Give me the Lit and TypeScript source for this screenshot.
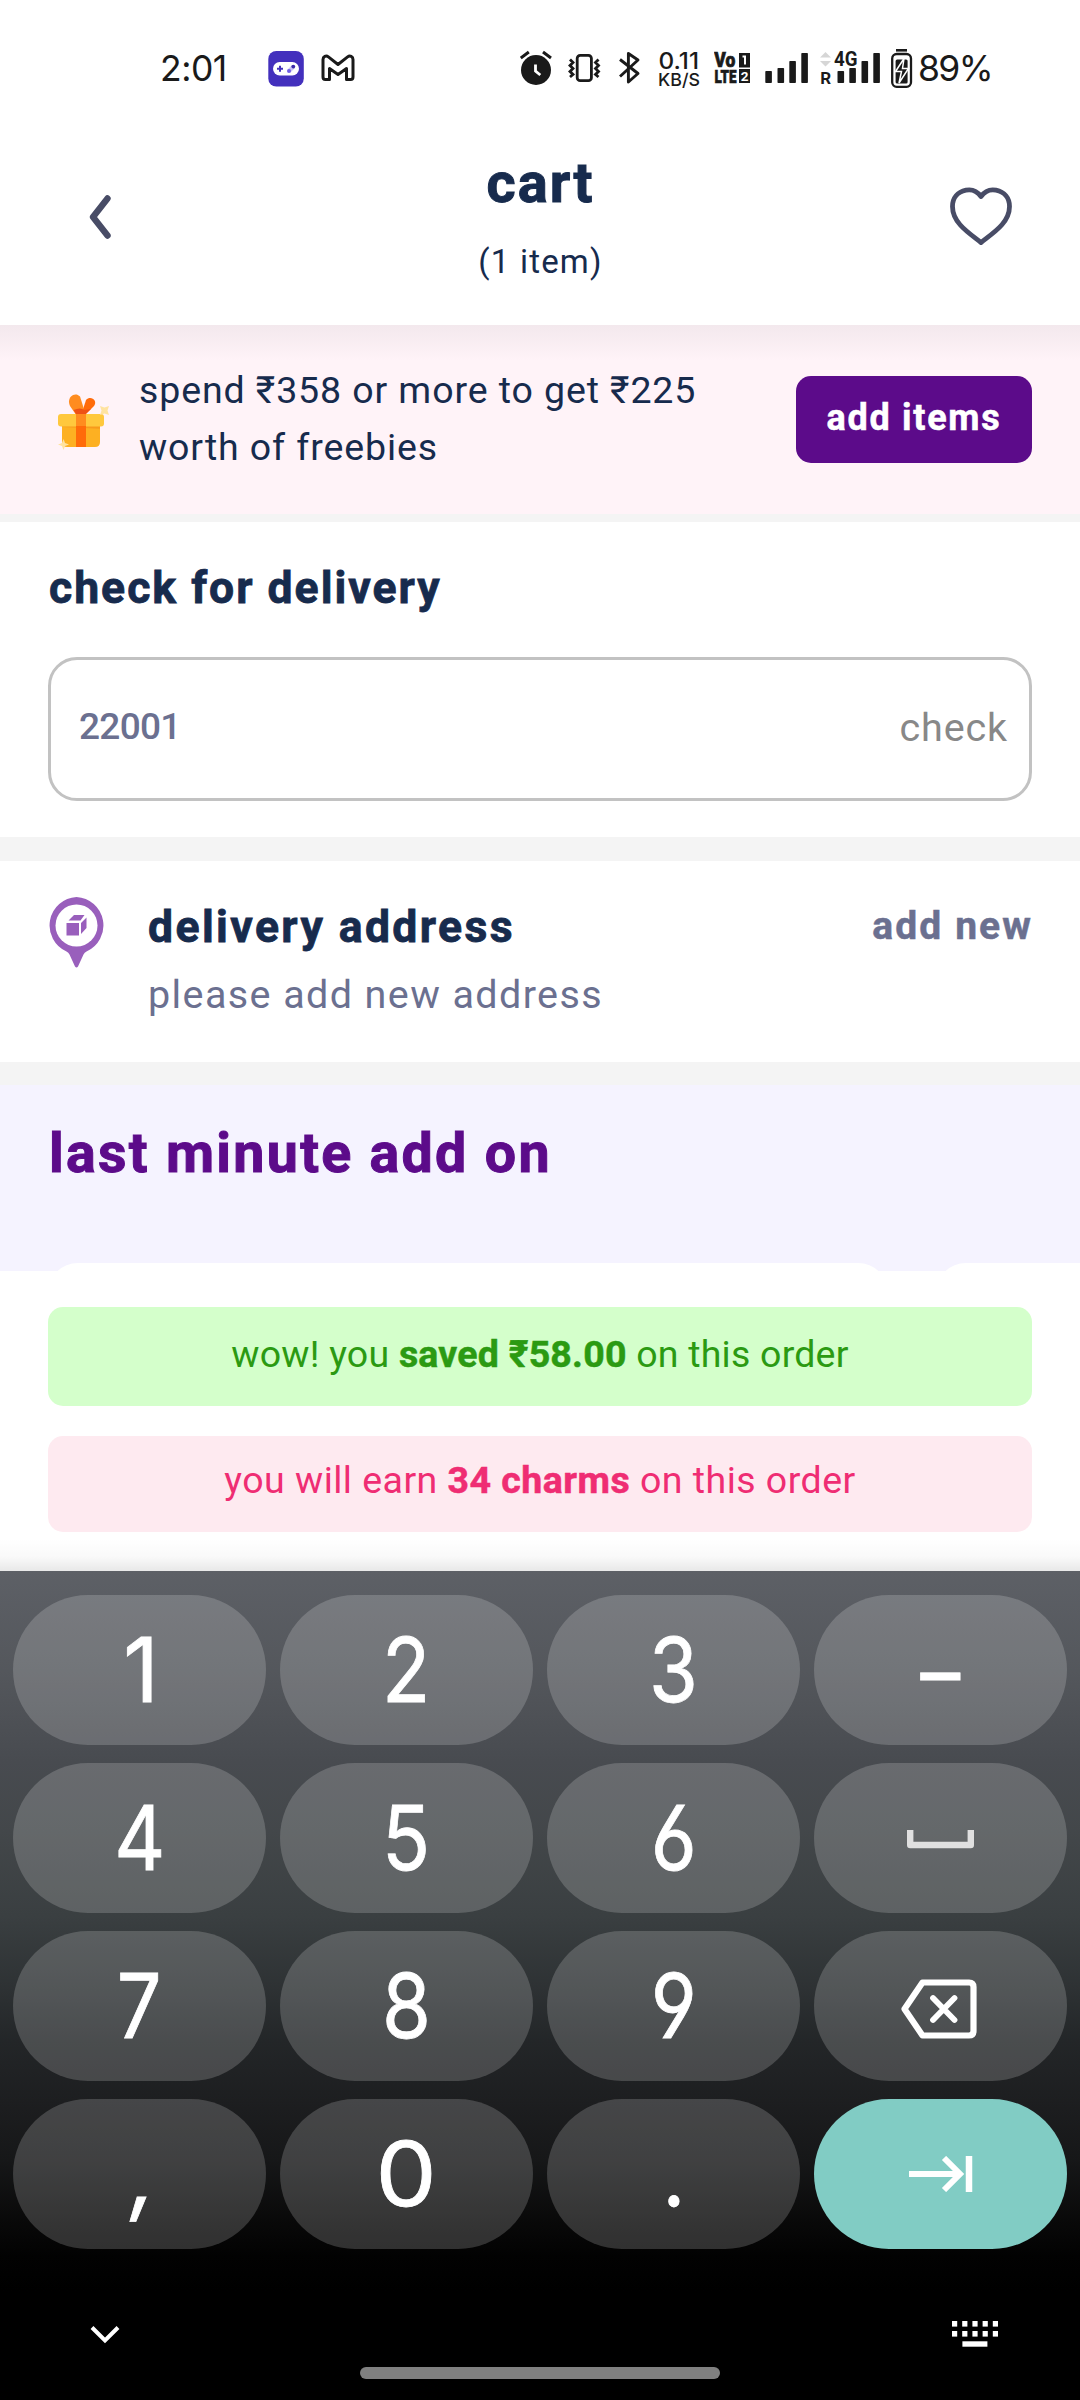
import { LitElement, html, svg, css } from "lit";
import { customElement } from "lit/decorators.js";

const INK = "#1a1a1a";

@customElement("status-bar")
class StatusBar extends LitElement {
  static styles = css`
    :host { display: flex; height: 118px; flex: none; padding-left: 158px; font-family: Inter, Roboto, "Liberation Sans", sans-serif; color: #1a1a1a; }
    svg { display: block; flex: none; height: 118px; }
    .time, .pct { flex: none; font-size: 35.5px; line-height: 42px; padding-top: 48px; white-space: nowrap; }
    .time { width: 110px; padding-left: 2px; letter-spacing: -0.5px; box-sizing: border-box; }
    .pct { letter-spacing: -1.6px; margin-left: 5px; }
    .gap { width: 145px; flex: none; }
    text { font-family: Roboto, "Liberation Sans", sans-serif; fill: #1a1a1a; }
    .rate { font-family: Inter, Roboto, sans-serif; }
    .inverse { fill: #fff; }
  `;
  render() {
    const bar = (x: number, top: number) => svg`<rect x=${x} y=${top} width="6.6" height=${83 - top} rx="0.8" fill=${INK}/>`;
    return html`
      <div class="time">2:01</div>
      <svg width="107" viewBox="268 0 107 118">
        <rect x="268.3" y="51" width="35.5" height="35.5" rx="8" fill="#4330bd"/>
        <rect x="273" y="62" width="26" height="13.4" rx="6.7" fill="#fff"/>
        <path d="M277 68.7h6M280 65.7v6" stroke="#4330bd" stroke-width="2"/>
        <path d="M289 71l4.500-4.500" stroke="#c9c3f2" stroke-width="4"/>
        <circle cx="289" cy="71" r="2" fill="#6f5ee6"/><circle cx="293.3" cy="66.6" r="1.9" fill="#3a28a8"/>
        <path d="M323 59.500c0-3 3-4.400 5.400-2.600L338 64.500l9.600-7.600c2.400-1.800 5.400-.4 5.400 2.600V77c0 1.600-.8 2.500-2.300 2.500H346.500V68.500l-8.500 6-8.500-6v11h-4.200c-1.500 0-2.300-.9-2.300-2.500z" fill="#fff" stroke=${INK} stroke-width="3" stroke-linejoin="round"/>
      </svg>
      <div class="gap"></div>
      <svg width="33" viewBox="520 0 33 118">
        <circle cx="536" cy="70" r="15" fill=${INK}/>
        <path d="M520.800 58l8-6M551 58l-8-6" stroke=${INK} stroke-width="3"/>
        <path d="M535.500 64.500v6.500l4.800 4" fill="none" stroke="#fff" stroke-width="2.800"/>
      </svg>
      <svg width="66" viewBox="553 0 66 118">
        <rect x="577.2" y="55.3" width="14.2" height="25.4" rx="3" fill="none" stroke=${INK} stroke-width="2.8"/>
        <path d="M570 59.500l3 3-3 3 3 3-3 3 3 3-3 2.500M598.500 59.500l-3 3 3 3-3 3 3 3-3 3 3 2.500" fill="none" stroke=${INK} stroke-width="2.800"/>
      </svg>
      <svg width="39" viewBox="619 0 39 118">
        <path d="M620 59.500l18 14-9.600 8.500V53.500l9.600 6.500-18 16.500" fill="none" stroke=${INK} stroke-width="2.900" stroke-linejoin="round"/>
      </svg>
      <svg width="56" viewBox="658 0 56 118">
        <text class="rate" x="658.5" y="69" font-size="22.5" font-weight="500" textLength="40.5" lengthAdjust="spacingAndGlyphs">0.11</text>
        <text class="rate" x="658" y="86" font-size="17.5" font-weight="500" textLength="42" lengthAdjust="spacingAndGlyphs">KB/S</text>
      </svg>
      <svg width="51" viewBox="714 0 51 118">
        <text x="714.3" y="67.3" font-size="19.5" font-weight="900" textLength="21" lengthAdjust="spacingAndGlyphs" stroke=${INK} stroke-width="0.7">Vo</text>
        <text x="714.5" y="82.8" font-size="19" font-weight="900" textLength="22" lengthAdjust="spacingAndGlyphs" stroke=${INK} stroke-width="0.7">LTE</text>
        <rect x="739" y="53" width="11" height="14.5" fill=${INK}/><rect x="739" y="69" width="11" height="14" fill=${INK}/>
        <path d="M742.500 56.500h2.500v8" fill="none" stroke="#fff" stroke-width="2"/>
        <text class="inverse" x="740.8" y="81" font-size="13.5" font-weight="700">2</text>
      </svg>
      <svg width="55" viewBox="765 0 55 118">${bar(765.3, 71)}${bar(777.5, 68)}${bar(789.3, 61)}${bar(801.3, 53)}</svg>
      <svg width="70" viewBox="820 0 70 118">
        <path d="M820 57.500l5.500-5.500 5.500 5.500zM820 61l5.500 5.500 5.500-5.500z" fill="#d6d6d6"/>
        ${bar(837.5, 71)}${bar(849.3, 68)}${bar(861.5, 61)}${bar(873.3, 53)}
        <text x="834" y="66" font-size="20.5" font-weight="700" textLength="23.5" lengthAdjust="spacingAndGlyphs" stroke="#fff" stroke-width="3" paint-order="stroke">4G</text>
        <text x="820.3" y="83.5" font-size="17" font-weight="700">R</text>
      </svg>
      <svg width="23" viewBox="890 0 23 118">
        <path d="M896 50.300h11" stroke=${INK} stroke-width="2.600"/>
        <rect x="892.2" y="54" width="18.8" height="32.8" rx="4.5" fill="none" stroke=${INK} stroke-width="2.3"/>
        <rect x="895.6" y="59.5" width="12" height="24" rx="1.5" fill=${INK}/>
        <path d="M904 58.500l-8.500 13h6l-2.500 11.500 9.500-14.500h-6z" fill=${INK} stroke="#fff" stroke-width="1.500"/>
      </svg>
      <div class="pct">89%</div>
    `;
  }
}

@customElement("number-pad")
class NumberPad extends LitElement {
  static styles = css`
    :host { display: flex; flex-direction: column; flex: none; height: 829px; box-sizing: border-box; padding-top: 24px;
      background: linear-gradient(180deg, #5d6066 0, #54575c 100px, #484b50 190px, #43474a 260px, #3a3f41 345px, #2d3133 420px, #232628 470px, #1d1e20 530px, #161718 590px, #090909 650px, #020202 685px, #000 720px); }
    .keys { display: grid; grid-template-columns: repeat(4, 253px); grid-auto-rows: 150.3px; column-gap: 14px; row-gap: 17.7px; padding: 0 13px; }
    .key { display: flex; align-items: center; justify-content: center; border-radius: 76px; background: rgba(255, 255, 255, 0.18); color: #fff; }
    .label { font: 400 89px/100px Inter, Roboto, sans-serif; font-feature-settings: "cv03", "cv04"; transform: scaleX(0.89); -webkit-text-stroke: 0.8px #fff; }
    .zero { transform: scaleX(1.09); }
    .one { padding-left: 4px; transform: scaleX(0.98); }
    .comma { padding-left: 9px; transform: skewX(-8deg); }
    .dash { padding-top: 4px; }
    .next { background: #81ccc4; }
    svg { display: block; }
    .space { margin-top: 4px; }
    .erase { margin: 5px 4px 0 0; }
    .nav { display: flex; justify-content: space-between; padding: 72px 82px 0 90px; }
    .home { width: 360px; height: 12px; border-radius: 6px; background: #808080; margin: 20px auto 0; }
  `;
  render() {
    const cells = ["1", "2", "3", "–", "4", "5", "6", "space", "7", "8", "9", "back", ",", "0", ".", "next"];
    const shapes: Record<string, string> = { "0": "zero", "1": "one", ",": "comma", "–": "dash" };
    const face = (k: string) => {
      if (k === "space") return html`<svg class="space" width="67" height="20" viewBox="0 0 67 20"><path d="M3.200 0v15h60.600V0" fill="none" stroke="#e0e0e0" stroke-width="6.400" stroke-linejoin="round"/></svg>`;
      if (k === "back") return html`<svg class="erase" width="78" height="62" viewBox="0 0 78 62">
        <path d="M22.500 4.500H69q4.500 0 4.500 4.500v44q0 4.500-4.500 4.500H22.500L4.500 31z" fill="none" stroke="#fff" stroke-width="6.200" stroke-linejoin="round"/>
        <path d="M33 20l21.500 22M54.500 20L33 42" stroke="#fff" stroke-width="5.800" stroke-linecap="round"/></svg>`;
      if (k === "next") return html`<svg width="64" height="36" viewBox="0 0 64 36">
        <path d="M0 18h51M35 2l16 16-16 16" fill="none" stroke="#fff" stroke-width="6"/><path d="M60 0v36" stroke="#fff" stroke-width="6.500"/></svg>`;
      return html`<span class="label ${shapes[k] ?? ""}">${k}</span>`;
    };
    return html`
      <div class="keys">${cells.map((k) => html`<div class="key ${k === "next" ? "next" : ""}">${face(k)}</div>`)}</div>
      <div class="nav">
        <svg width="30" height="26" viewBox="0 0 30 26"><path d="M2 6.500l13 13 13-13" fill="none" stroke="#fff" stroke-width="4"/></svg>
        <svg width="46" height="26" viewBox="0 0 46 26" fill="#fff">
          ${[0, 10.2, 20.4, 30.6, 40.8].map((x) => svg`<rect x=${x} y="0" width="5.2" height="5.6"/><rect x=${x} y="10" width="5.2" height="5.6"/>`)}
          <rect x="10.4" y="20.3" width="25" height="5.4"/></svg>
      </div>
      <div class="home"></div>
    `;
  }
}

@customElement("app-root")
class AppRoot extends LitElement {
  static styles = css`
    :host { display: flex; flex-direction: column; width: 1080px; height: 2400px; overflow: hidden; background: #fff;
      font-family: Roboto, "Noto Sans", sans-serif; color: #172b4d; }
    * { box-sizing: border-box; }
    svg { display: block; flex: none; }
    .head { display: flex; justify-content: space-between; height: 207px; flex: none; padding: 0 67px 0 87px; }
    .titles { text-align: center; padding: 32px 0 0 21px; white-space: nowrap; }
    .title { font-size: 56px; line-height: 66px; font-weight: 700; letter-spacing: 2px; -webkit-text-stroke: 1px currentColor; }
    .count { font-size: 33px; line-height: 38px; margin-top: 27px; letter-spacing: 1.2px; }
    .back { margin-top: 76px; }
    .heart { margin-top: 69px; }
    .promo { display: flex; height: 189px; flex: none; padding: 0 48px 0 58px;
      background: linear-gradient(180deg, rgba(40, 50, 50, 0.055), rgba(40, 50, 50, 0.035) 14px, rgba(40, 50, 50, 0) 36px), #fff3f8; }
    .gift { margin-top: 69px; }
    .offer { width: 610px; margin: 37px 0 0 26px; font-size: 37.5px; line-height: 57px; letter-spacing: 0.9px; white-space: nowrap; }
    .add { display: flex; align-items: center; justify-content: center; width: 236px; height: 87px; margin: 51px 0 0 auto; padding-bottom: 4px;
      border-radius: 15px; background: #5c0b8a; color: #fff; font-size: 36px; font-weight: 700; letter-spacing: 1.7px; white-space: nowrap; -webkit-text-stroke: 0.5px currentColor; }
    .rule { height: 24px; flex: none; background: #f4f4f4; }
    .thin { height: 8px; }
    .last { height: 23px; }
    .check { height: 315px; flex: none; padding: 40px 48px 0; }
    h2 { margin: 0; font-size: 44.5px; line-height: 52px; font-weight: 700; letter-spacing: 2px; white-space: nowrap; -webkit-text-stroke: 0.8px currentColor; }
    .check h2, .addon h2 { padding-left: 1px; }
    .field { display: flex; align-items: center; justify-content: space-between; height: 144px; margin-top: 43px; padding: 0 21px 2px 28px;
      border: 3px solid #c2c2c2; border-radius: 29px; }
    .code { font-size: 37px; font-weight: 500; color: #6b7090; letter-spacing: -0.7px; padding-bottom: 4px; }
    .go { font-size: 39.5px; color: #888; letter-spacing: 0.9px; padding-bottom: 2px; }
    .address { display: flex; height: 201px; flex: none; padding: 0 48px; }
    .pin { margin-top: 36px; }
    .where { margin: 40px 0 0 42px; white-space: nowrap; }
    .where h2 { letter-spacing: 2.4px; }
    .sub { font-size: 39.5px; line-height: 46px; margin-top: 19px; letter-spacing: 1.4px; color: #6b7090; }
    .new { margin: 42px -1px 0 auto; font-size: 39px; line-height: 46px; font-weight: 700; letter-spacing: 2.1px; color: #6b7090; -webkit-text-stroke: 0.5px currentColor; }
    .addon { height: 186px; flex: none; overflow: hidden; padding: 37px 0 0 48px; background: #f5f3ff; }
    .addon h2 { font-size: 55.5px; line-height: 64px; letter-spacing: 2.3px; color: #5c0b8a; -webkit-text-stroke: 1px currentColor; }
    .cards { display: flex; gap: 48px; margin-top: 77px; }
    .card { flex: none; width: 840px; height: 300px; border-radius: 30px; background: #fff; }
    .sheet { display: flex; flex-direction: column; gap: 30px; height: 300px; flex: none; padding: 36px 48px 0;
      background: linear-gradient(180deg, rgba(0, 0, 0, 0) 268px, rgba(0, 0, 0, 0.025) 286px, rgba(0, 0, 0, 0.09) 300px), #fff; }
    .note { display: flex; align-items: center; justify-content: center; border-radius: 15px; font-size: 37.5px; white-space: pre; }
    .saved { height: 99px; padding-bottom: 5px; background: #d4ffcb; color: #2b9a12; letter-spacing: 0.22px; }
    .earn { height: 96px; padding-bottom: 9px; background: #feeaf0; color: #ef2d73; letter-spacing: 0.47px; }
    b { font-weight: 700; -webkit-text-stroke: 0.5px currentColor; }
  `;
  render() {
    return html`
      <status-bar></status-bar>
      <div class="head">
        <svg class="back" width="24" height="46" viewBox="0 0 24 46"><path d="M20.500 4.500L6 23l14.500 18.500" fill="none" stroke="#484c66" stroke-width="6.400" stroke-linecap="round" stroke-linejoin="round"/></svg>
        <div class="titles"><div class="title">cart</div><div class="count">(1 item)</div></div>
        <svg class="heart" width="64" height="60" viewBox="0 0 64 60"><path d="M32 9.500C27 2.500 20.500 2.500 17 3.200 8.500 5 3.500 11 3.500 19.500 3.500 36 20 46 32 55.500 44 46 60.500 36 60.500 19.500 60.500 11 55.500 5 47 3.200 43.500 2.500 37 2.500 32 9.500z" fill="none" stroke="#484c66" stroke-width="4.800" stroke-linejoin="round"/></svg>
      </div>
      <div class="promo">
        <svg class="gift" width="55" height="56" viewBox="0 0 55 56">
          <path d="M4 32h38v16q0 5-5 5H9q-5 0-5-5z" fill="#fdb022"/><path d="M4 32h38v2.700L4 33z" fill="#f79a1c"/>
          <rect y="20" width="46" height="12.5" rx="3" fill="#ffc83d"/>
          <rect x="18" y="20" width="10" height="12.5" fill="#ff8c1f"/><rect x="18" y="32" width="10" height="21" fill="#ff6b0a"/>
          <path d="M17.500 20L12 12C8 3 17-3 22 2.500L25 12 27 20z" fill="#ff8c1f"/><path d="M23.500 20L28 6c5-5 12 1 8 6l-8 8z" fill="#ff6b0a"/>
          <path d="M18 20l-2.500-4q7-3 10.500 0l7-1-5.500 5z" fill="#ee5215"/>
          <path d="M42 12l4.500 1.500L51 12l-1.500 4.500L51 21l-4.500-1.500L42 21l1.500-4.500zM5.500 45l1.500 4 4 1.500-4 1.500-1.500 4L4 52 0 50.500 4 49z" fill="#ffe3a0"/>
        </svg>
        <div class="offer">spend ₹358 or more to get ₹225<br>worth of freebies</div>
        <div class="add">add items</div>
      </div>
      <div class="rule thin"></div>
      <div class="check">
        <h2>check for delivery</h2>
        <div class="field"><span class="code">22001</span><span class="go">check</span></div>
      </div>
      <div class="rule"></div>
      <div class="address">
        <svg class="pin" width="58" height="71" viewBox="0 0 58 71">
          <path d="M28.500 0a28.500 28.500 0 0 1 10 54.500q-2 1-3 3l-5.500 12q-1.500 2-3 0l-5.500-12q-1-2-3-3A28.500 28.500 0 0 1 28.500 0z" fill="#995fbc"/>
          <circle cx="28.5" cy="28.5" r="21" fill="#fff"/>
          <path d="M18.500 26h12.500v12.500H18.500zM20.500 23.500l5.500-5.500h10.500L32.500 23.500zM33 37V26l5.500-5.500v10.500z" fill="#995fbc"/>
        </svg>
        <div class="where"><h2>delivery address</h2><div class="sub">please add new address</div></div>
        <div class="new">add new</div>
      </div>
      <div class="rule last"></div>
      <div class="addon">
        <h2>last minute add on</h2>
        <div class="cards"><div class="card"></div><div class="card"></div></div>
      </div>
      <div class="sheet">
        <div class="note saved"><span>wow! you <b>saved ₹58.00</b> on this order</span></div>
        <div class="note earn"><span>you will earn <b>34 charms</b> on this order</span></div>
      </div>
      <number-pad></number-pad>
    `;
  }
}
